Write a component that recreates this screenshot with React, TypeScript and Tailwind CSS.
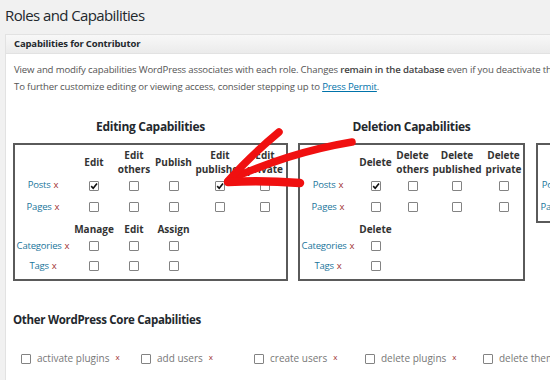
import type { ReactNode } from 'react'

type Row =
  | { kind: 'head'; h: number; pt?: number; labels: string[] }
  | { kind: 'data'; h: number; label: string; checks: boolean[] }

interface CapBoxProps {
  title?: string
  cols: number[]
  rows: Row[]
  pb?: number
}

function Checkbox({ checked = false }: { checked?: boolean }) {
  return (
    <span className="relative inline-block h-[10px] w-[10px] shrink-0 rounded-[1px] border border-[#838383] bg-white">
      {checked && (
        <svg className="absolute left-[0px] top-[0px]" width="8" height="8" viewBox="0 0 8 8" aria-hidden="true">
          <path d="M1.2 4.1 L3.2 6.2 L7 1.4" fill="none" stroke="#111" strokeWidth="1.6" />
        </svg>
      )}
    </span>
  )
}

function TypeLabel({ name }: { name: string }) {
  return (
    <span className="whitespace-nowrap text-[9.5px] tracking-[-0.2px]">
      <span className="text-[#21759b]">{name}</span>
      <span className="ml-[3px] text-[#a03030]">x</span>
    </span>
  )
}

function CapBox({ title, cols, rows, pb = 0 }: CapBoxProps) {
  const width = cols.reduce((a, b) => a + b, 0) + 4
  return (
    <div className="flex shrink-0 flex-col" style={{ width }}>
      <h3 className="h-[25px] whitespace-nowrap text-center text-[12px] font-bold leading-[18px] tracking-[-0.3px] text-[#23282d]">
        {title ?? '\u00a0'}
      </h3>
      <div className="border-2 border-[#5a5a5a]" style={{ paddingBottom: pb }}>
        {rows.map((row, i) => (
          <div className="flex" key={i} style={{ height: row.h, paddingTop: row.kind === 'head' ? row.pt ?? 0 : 0 }}>
            <div className="flex shrink-0 items-center justify-center" style={{ width: cols[0] }}>
              {row.kind === 'data' && <TypeLabel name={row.label} />}
            </div>
            {cols.slice(1).map((w, c) => (
              <div className="flex shrink-0 items-center justify-center" key={c} style={{ width: w }}>
                {row.kind === 'head' && row.labels[c] && (
                  <span className="whitespace-pre text-center text-[10px] font-bold leading-[14px] text-[#333]">
                    {row.labels[c]}
                  </span>
                )}
                {row.kind === 'data' && c < row.checks.length && <Checkbox checked={row.checks[c]} />}
              </div>
            ))}
          </div>
        ))}
      </div>
    </div>
  )
}

const coreCaps: { name: string; w: number }[] = [
  { name: 'activate plugins', w: 120 },
  { name: 'add users', w: 113 },
  { name: 'create users', w: 111 },
  { name: 'delete plugins', w: 118 },
  { name: 'delete themes', w: 120 },
]

function Arrow() {
  return (
    <svg className="pointer-events-none absolute left-0 top-0" width="550" height="380" viewBox="0 0 550 380" aria-hidden="true">
      <g fill="none" stroke="#f01010" strokeLinecap="round" strokeLinejoin="round">
        <path d="M233 178 C 268 163, 304 150, 352 142" strokeWidth="7.5" />
        <path d="M228 181 Q 249 157, 279 132" strokeWidth="7.5" />
        <path d="M228 182 Q 262 180, 300 183" strokeWidth="8.5" />
      </g>
    </svg>
  )
}

function Section({ children }: { children: ReactNode }) {
  return <div className="pl-[7px]">{children}</div>
}

export default function App() {
  return (
    <div className="relative h-[380px] w-[550px] overflow-hidden bg-[#f1f1f1] font-['Open_Sans','Noto_Sans',sans-serif] text-[#444]">
      <h1 className="pl-[5px] pt-[2px] text-[15px] leading-[26px] tracking-[-0.6px] text-[#23282d]">Roles and Capabilities</h1>
      <div className="ml-[5px] mt-[6px] w-[620px] border border-[#e2e2e2] bg-white pb-[40px]">
        <div className="flex h-[19px] items-center border-b border-[#e2e2e2] bg-gradient-to-b from-[#f8f8f8] to-[#ebebeb] pl-[8px] text-[9.5px] font-bold tracking-[-0.15px] text-[#23282d]">
          Capabilities for Contributor
        </div>
        <div className="pl-[8px] pt-[7px] text-[9.6px] leading-[17px] tracking-[-0.15px] text-[#555]">
          <p className="whitespace-nowrap">
            View and modify capabilities WordPress associates with each role. Changes{' '}
            <b className="font-semibold text-[#444]">remain in the database</b> even if you deactivate this plugin.
          </p>
          <p className="whitespace-nowrap">
            To further customize editing or viewing access, consider stepping up to{' '}
            <span className="text-[#0073aa] underline">Press Permit</span>.
          </p>
        </div>
        <Section>
          <div className="mt-[23px] flex gap-[10px]">
            <CapBox
              title="Editing Capabilities"
              cols={[56, 46, 34, 45, 48, 42]}
              rows={[
                { kind: 'head', h: 31, pt: 3, labels: ['Edit', 'Edit\nothers', 'Publish', 'Edit\npublished', 'Edit\nprivate'] },
                { kind: 'data', h: 19, label: 'Posts', checks: [true, false, false, true, false] },
                { kind: 'data', h: 24, label: 'Pages', checks: [false, false, false, false, false] },
                { kind: 'head', h: 20, labels: ['Manage', 'Edit', 'Assign'] },
                { kind: 'data', h: 14, label: 'Categories', checks: [false, false, false] },
                { kind: 'data', h: 26, label: 'Tags', checks: [false, false, false] },
              ]}
            />
            <CapBox
              title="Deletion Capabilities"
              cols={[56, 39, 35, 54, 39]}
              rows={[
                { kind: 'head', h: 31, pt: 3, labels: ['Delete', 'Delete\nothers', 'Delete\npublished', 'Delete\nprivate'] },
                { kind: 'data', h: 19, label: 'Posts', checks: [true, false, false, false] },
                { kind: 'data', h: 24, label: 'Pages', checks: [false, false, false, false] },
                { kind: 'head', h: 20, labels: ['Delete'] },
                { kind: 'data', h: 14, label: 'Categories', checks: [false] },
                { kind: 'data', h: 26, label: 'Tags', checks: [false] },
              ]}
            />
            <div className="ml-[1px]">
              <CapBox
                cols={[38, 40, 40]}
                pb={2}
                rows={[
                  { kind: 'head', h: 31, pt: 3, labels: ['', ''] },
                  { kind: 'data', h: 19, label: 'Posts', checks: [false, false] },
                  { kind: 'data', h: 24, label: 'Pages', checks: [false, false] },
                ]}
              />
            </div>
          </div>
          <h3 className="mt-[30px] text-[11.5px] font-bold leading-[18px] tracking-[-0.3px] text-[#23282d]">
            Other WordPress Core Capabilities
          </h3>
          <div className="mt-[22px] flex pl-[8px]">
            {coreCaps.map((cap) => (
              <div className="flex shrink-0 items-center" key={cap.name} style={{ width: cap.w }}>
                <Checkbox />
                <span className="ml-[6px] whitespace-nowrap text-[10px] text-[#777]">{cap.name}</span>
                <span className="ml-[6px] -translate-y-[2px] text-[8px] text-[#a03030]">x</span>
              </div>
            ))}
          </div>
        </Section>
      </div>
      <Arrow />
    </div>
  )
}
